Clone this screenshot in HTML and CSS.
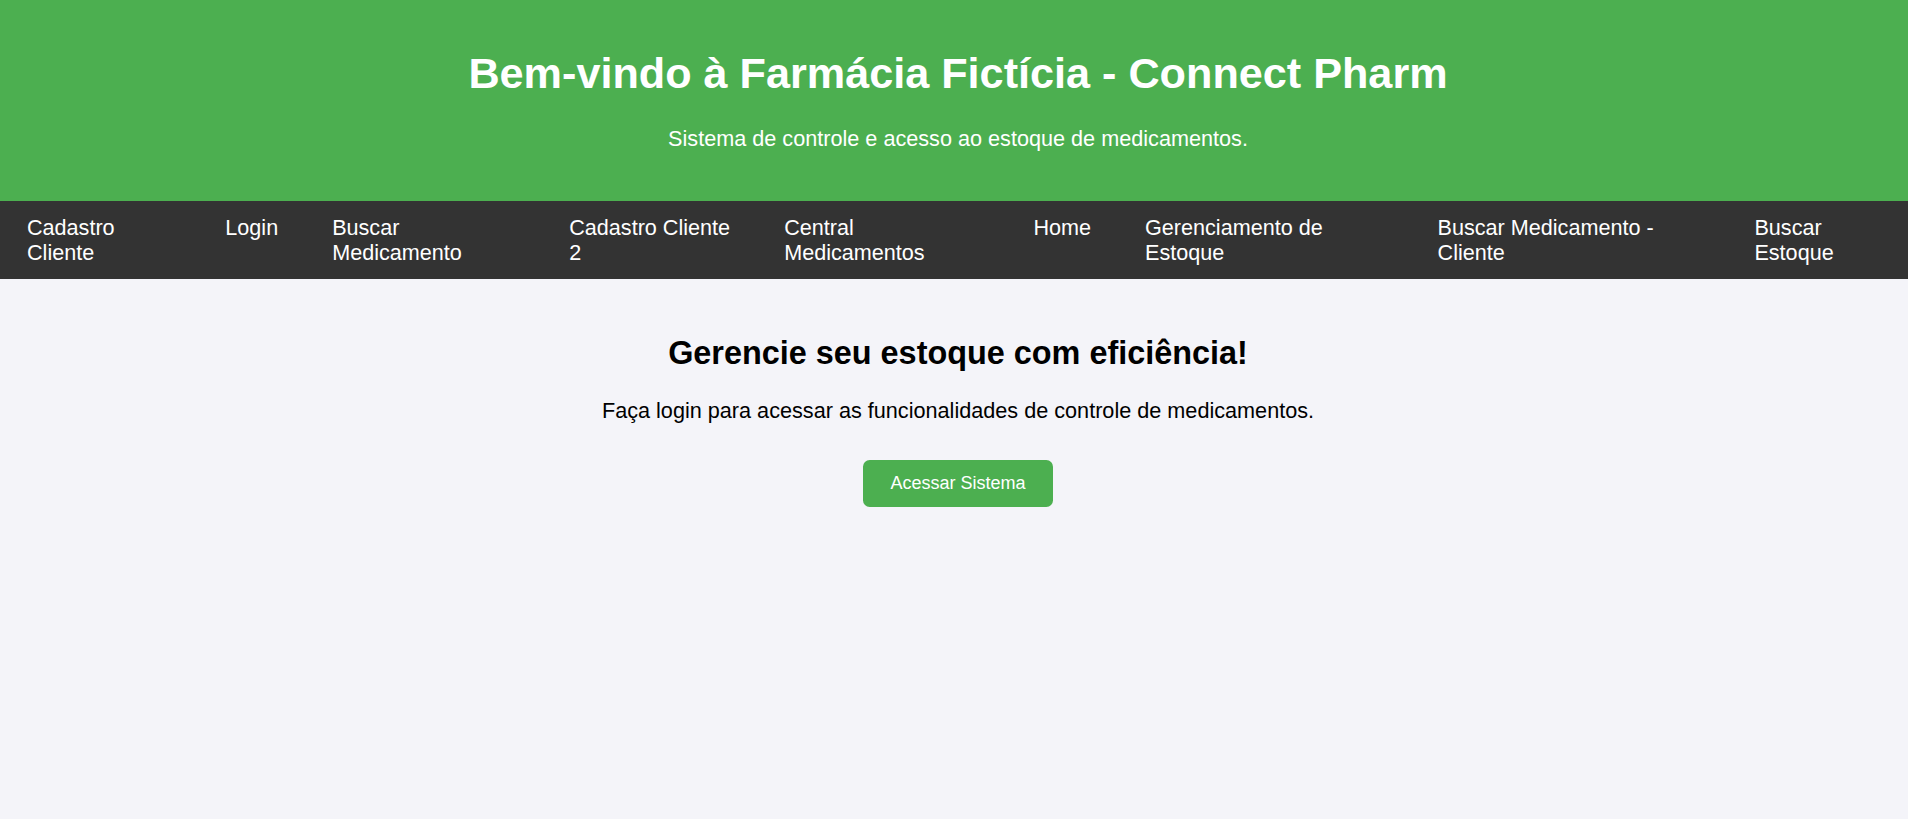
FILE: index.html
```html
<!DOCTYPE html>
<html lang="pt-BR">
<head>
<meta charset="UTF-8">
<title>Farmácia Fictícia - Connect Pharm</title>
<link rel="stylesheet" href="styles.css">
</head>
<body>
<header class="site-header">
  <h1 class="site-title">Bem-vindo à Farmácia Fictícia - Connect Pharm</h1>
  <p class="site-subtitle">Sistema de controle e acesso ao estoque de medicamentos.</p>
</header>
<nav class="nav">
  <ul class="nav-list">
    <li class="nav-item"><a class="nav-link" href="#">Cadastro Cliente</a></li>
    <li class="nav-item"><a class="nav-link" href="#">Login</a></li>
    <li class="nav-item"><a class="nav-link" href="#">Buscar Medicamento</a></li>
    <li class="nav-item"><a class="nav-link" href="#">Cadastro Cliente 2</a></li>
    <li class="nav-item"><a class="nav-link" href="#">Central Medicamentos</a></li>
    <li class="nav-item"><a class="nav-link" href="#">Home</a></li>
    <li class="nav-item"><a class="nav-link" href="#">Gerenciamento de Estoque</a></li>
    <li class="nav-item"><a class="nav-link" href="#">Buscar Medicamento - Cliente</a></li>
    <li class="nav-item"><a class="nav-link" href="#">Buscar Estoque</a></li>
  </ul>
</nav>
<main class="content">
  <h2 class="content-title">Gerencie seu estoque com eficiência!</h2>
  <p class="content-text">Faça login para acessar as funcionalidades de controle de medicamentos.</p>
  <div class="cta">
    <button class="btn" type="button">Acessar Sistema</button>
  </div>
</main>
</body>
</html>
```

FILE: styles.css
```css
* {
  box-sizing: border-box;
}

body {
  margin: 0;
  font-family: "Liberation Sans", Arial, sans-serif;
  background: #f4f4f9;
  color: #000;
}

.site-header {
  background: #4caf50;
  color: #fff;
  text-align: center;
  padding: 20.5px 0 28.7px 8px;
}

.site-title {
  font-size: 43.2px;
  line-height: 49px;
  margin: 28.6px 0;
}

.site-subtitle {
  font-size: 21.65px;
  line-height: 24.5px;
  margin: 0 0 21.33px;
}

.nav {
  background: #333;
  overflow: hidden;
}

.nav-list {
  display: flex;
  list-style: none;
  margin: 0 -10px 0 0;
  padding: 0;
}

.nav-link {
  display: block;
  color: #fff;
  text-decoration: none;
  font-size: 21.6px;
  line-height: 25.6px;
  padding: 13.6px 27px 13.33px;
}

.content {
  text-align: center;
  padding: 29.5px 26.67px 26.67px 34.67px;
}

.content-title {
  font-size: 32.4px;
  line-height: 36.8px;
  margin: 26.56px 0;
}

.content-text {
  font-size: 21.65px;
  line-height: 24.5px;
  margin: 26.56px 0 21.33px;
}

.cta {
  padding-top: 15.2px;
}

.btn {
  font-family: "Liberation Sans", Arial, sans-serif;
  font-size: 18px;
  line-height: 20.6px;
  color: #fff;
  background: #4caf50;
  border: none;
  border-radius: 6.67px;
  padding: 13.33px 27.3px;
  cursor: pointer;
}
```
